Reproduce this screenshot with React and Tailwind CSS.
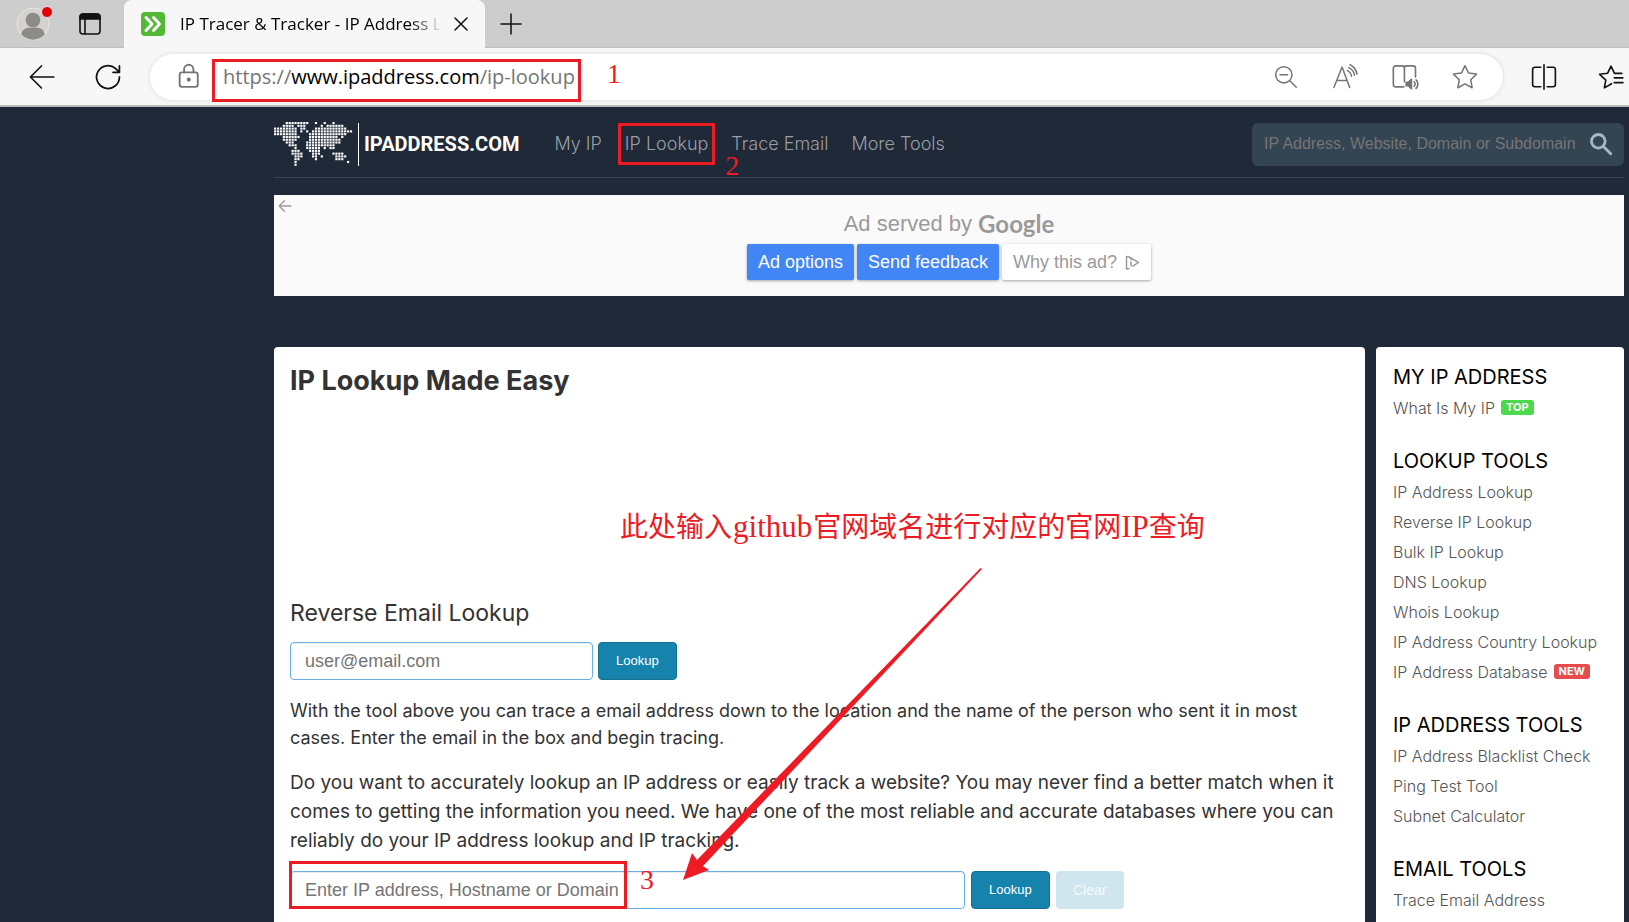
import React from "react";

const RED = "#ed1c24";

const MAP_ROWS = [
  "....########..#..#..#......",
  "...####.###.....#.######...",
  "########.##...###########..",
  "########.#.#.##############",
  "########....#############..",
  "...######...##########.#...",
  "...#####....###########....",
  "....###....############....",
  ".....###...##########......",
  ".......#...#####.#.##......",
  "......###...####...........",
  "......####...###....####...",
  ".......###...##.#....####..",
  ".......##.....#......###...",
  ".......#.................#.",
  ".......#...................",
];

const SIDEBAR = [
  { title: "MY IP ADDRESS", links: [{ label: "What Is My IP", badge: "TOP" }] },
  {
    title: "LOOKUP TOOLS",
    links: [
      { label: "IP Address Lookup" },
      { label: "Reverse IP Lookup" },
      { label: "Bulk IP Lookup" },
      { label: "DNS Lookup" },
      { label: "Whois Lookup" },
      { label: "IP Address Country Lookup" },
      { label: "IP Address Database", badge: "NEW" },
    ],
  },
  {
    title: "IP ADDRESS TOOLS",
    links: [
      { label: "IP Address Blacklist Check" },
      { label: "Ping Test Tool" },
      { label: "Subnet Calculator" },
    ],
  },
  { title: "EMAIL TOOLS", links: [{ label: "Trace Email Address" }] },
];

function Icon({ size = 24, width = 1.5, children, className = "" }) {
  return (
    <svg
      aria-hidden="true"
      width={size}
      height={size}
      viewBox="0 0 24 24"
      fill="none"
      stroke="currentColor"
      strokeWidth={width}
      strokeLinecap="round"
      strokeLinejoin="round"
      className={className}
    >
      {children}
    </svg>
  );
}

function Mark({ children, className }) {
  return (
    <span
      className={
        "pointer-events-none absolute font-['Liberation_Serif',serif] text-[28px] leading-7 text-[#ed1c24] " + className
      }
    >
      {children}
    </span>
  );
}

function TabStrip() {
  return (
    <div className="flex h-12 shrink-0 items-stretch bg-[#cdcdcd]">
      <div className="flex w-[124px] items-center gap-[27px] border-b border-[#bdbdbd] pl-4">
        <button aria-label="Profile" className="shrink-0">
          <svg width="36" height="36" viewBox="0 0 36 36" className="block">
            <circle cx="17" cy="18" r="16" fill="#d3d2ce" stroke="#e6e5e2" />
            <circle cx="17" cy="14" r="7.3" fill="#8d8b88" />
            <path d="M5.4 28.5 C6 22.5 11 21.6 17 21.6 S28 22.5 28.6 28.5 A15.6 15.6 0 0 1 5.4 28.5Z" fill="#8d8b88" />
            <circle cx="31" cy="6" r="5.5" fill="#e30000" stroke="#e4e4e4" />
          </svg>
        </button>
        <button aria-label="Tab actions" className="shrink-0">
          <svg width="22" height="22" viewBox="0 0 22 22" fill="none" stroke="#111" strokeWidth="1.6" className="block">
            <rect x="1" y="1" width="20" height="20" rx="3" />
            <path d="M1 4a3 3 0 0 1 3-3h14a3 3 0 0 1 3 3v2H1z" fill="#111" />
            <path d="M6 6v15" />
          </svg>
        </button>
      </div>
      <div className="flex w-[361px] items-center rounded-t-lg bg-[#f7f7f7] pl-[17px]">
        <svg width="24" height="24" viewBox="0 0 24 24" className="shrink-0">
          <rect width="24" height="24" rx="4" fill="#53b934" />
          <path d="M5 5.500l6 6.500-6 6.500M12.500 5.500l6 6.500-6 6.500" fill="none" stroke="#fff" strokeWidth="3" strokeLinecap="round" strokeLinejoin="round" />
        </svg>
        <div className="ml-[15px] w-[262px] overflow-hidden whitespace-nowrap font-['Open_Sans',sans-serif] text-[17px] text-black [mask-image:linear-gradient(to_right,black_88%,transparent)]">
          IP Tracer &amp; Tracker - IP Address Lookup
        </div>
        <button aria-label="Close tab" className="ml-2.5 text-[#111]">
          <Icon size={18} width={2}>
            <path d="M4 4l16 16M20 4L4 20" />
          </Icon>
        </button>
      </div>
      <div className="flex flex-1 items-center border-b border-[#bdbdbd] pl-3.5">
        <button aria-label="New tab" className="text-[#111]">
          <Icon>
            <path d="M12 2v20M2 12h20" />
          </Icon>
        </button>
      </div>
    </div>
  );
}

function Toolbar() {
  return (
    <div className="flex h-[59px] shrink-0 items-center border-b-2 border-[#b9bab8] bg-[#f7f7f7] pl-[29px] text-[#111]">
      <button aria-label="Back">
        <Icon size={26}>
          <path d="M23 12H1.500M11.500 1.800L1.300 12l10.200 10.200" />
        </Icon>
      </button>
      <button aria-label="Refresh" className="ml-[39px]">
        <Icon size={28}>
          <path d="M21.800 12a9.800 9.800 0 1 1-3.200-7.200l3 3M21.800 2.500v5.500h-5.500" />
        </Icon>
      </button>
      <div className="ml-7 flex h-[46px] flex-1 items-center rounded-full bg-white pl-[25px] pr-6 text-[#757575] shadow-[0_0_5px_rgba(0,0,0,0.12)]">
        <button aria-label="Site information">
          <Icon size={28} width={1.6}>
            <rect x="4" y="8" width="15.500" height="12.500" rx="2" />
            <path d="M7.800 8V5.500a4 4 0 0 1 8 0V8" />
            <circle cx="11.800" cy="14.200" r="1" fill="currentColor" />
          </Icon>
        </button>
        <div className="relative ml-[9px] w-[369px] whitespace-nowrap pl-[11px] font-['Open_Sans',sans-serif] text-xl leading-[30px]">
          <span role="textbox" aria-label="Address bar">
            https://<span className="text-black">www.ipaddress.com</span>/ip-lookup
          </span>
          <span className="pointer-events-none absolute inset-x-0 -bottom-2.5 -top-[3px] border-[3px] border-[#ed1c24]" />
          <Mark className="-right-10 -top-0.5">1</Mark>
        </div>
        <div className="ml-auto flex items-center gap-8">
          <button aria-label="Zoom out">
            <Icon size={26} width={1.4}>
              <circle cx="10" cy="10" r="7.500" />
              <path d="M15.500 15.500L21.500 21.500M6.500 10h7" />
            </Icon>
          </button>
          <button aria-label="Read aloud">
            <Icon size={28} width={1.3}>
              <path d="M2.500 21L9.500 3.500l6.500 17.500M5 15h8.800M14 6.500a6 6 0 0 1 3.500 4.800M15.200 4a9 9 0 0 1 5 6.500M16.300 1.500a11 11 0 0 1 6 8" />
            </Icon>
          </button>
          <button aria-label="Immersive reader">
            <Icon size={28} width={1.4}>
              <path d="M11 20.500H4a2 2 0 0 1-2-2V4.500a2 2 0 0 1 2-2h5.500a2 2 0 0 1 2 2V16M11.500 4.500a2 2 0 0 1 2-2H19a2 2 0 0 1 2 2V12" />
              <path d="M13 16.500h1.800l2.700-2.500v8l-2.700-2.500H13z" fill="currentColor" />
              <path d="M19.800 16.200a2.500 2.500 0 0 1 0 3.800M21.500 14.500a5 5 0 0 1 0 7.200" />
            </Icon>
          </button>
          <button aria-label="Add to favorites">
            <Icon size={28} width={1.3}>
              <path d="M12 2.300l3 6.300 6.900.9-5 4.800 1.200 6.900L12 17.900l-6.100 3.300 1.200-6.900-5-4.800 6.900-.9z" />
            </Icon>
          </button>
        </div>
      </div>
      <button aria-label="Split screen" className="ml-7">
        <Icon size={26}>
          <path d="M9 3H3.500a2 2 0 0 0-2 2v14a2 2 0 0 0 2 2H9M15 3h5.500a2 2 0 0 1 2 2v14a2 2 0 0 1-2 2H15M12 .8v22.400" />
        </Icon>
      </button>
      <button aria-label="Favorites" className="ml-[41px] mr-[5px]">
        <Icon size={26}>
          <path d="M12.500 18.200l-6.600 3.800 1.300-7.200L1.500 9.500l7.300-.9L12 2l3.200 6.600H22M15 12.800H23M15 17.200H23" />
        </Icon>
      </button>
    </div>
  );
}

function SiteLogo() {
  return (
    <a href="#home" className="flex items-center">
      <svg width="80" height="46" viewBox="0 0 80 46" fill="#fff" aria-hidden="true">
        {MAP_ROWS.flatMap((row, y) =>
          [...row].map((c, x) =>
            c === "#" ? <rect key={x + "-" + y} x={x * 2.92} y={y * 2.78 + 1} width="2.200" height="2.100" /> : null
          )
        )}
      </svg>
      <span className="ml-1 h-[43px] w-px bg-white" />
      <span className="ml-[5px] font-['Roboto',sans-serif] text-xl font-bold text-white">IPADDRESS.COM</span>
    </a>
  );
}

function SiteHeader() {
  return (
    <header className="flex h-[71px] items-center border-b border-[#334453] pt-1">
      <SiteLogo />
      <nav className="ml-[35px] flex items-center gap-[23px] text-lg font-light text-[#9a9ea5]">
        <a href="#my-ip">My IP</a>
        <a href="#ip-lookup" className="relative">
          IP Lookup
          <span className="pointer-events-none absolute -inset-x-[7px] -inset-y-[7px] border-[3px] border-[#ed1c24]" />
          <Mark className="-right-[31px] top-[22px]">2</Mark>
        </a>
        <a href="#trace-email">Trace Email</a>
        <a href="#more-tools">More Tools</a>
      </nav>
      <form className="ml-auto flex h-[43px] w-[372px] items-center rounded-md bg-[#334453] pl-3 pr-2.5">
        <input
          aria-label="IP Address, Website, Domain or Subdomain"
          placeholder="IP Address, Website, Domain or Subdomain"
          className="min-w-0 flex-1 bg-transparent font-['Liberation_Sans',sans-serif] text-base outline-none placeholder:text-[#757575]"
        />
        <button type="button" aria-label="Search" className="text-[#a5b9c0]">
          <Icon size={26} width={2.6}>
            <circle cx="9.500" cy="9.500" r="6.300" />
            <path d="M14.500 14.500l6.500 6.500" />
          </Icon>
        </button>
      </form>
    </header>
  );
}

function AdBanner() {
  const button = "h-9 rounded-xs px-[11px] text-lg shadow-[0_1px_3px_rgba(0,0,0,0.35)] ";
  return (
    <section className="relative mt-[17px] h-[101px] bg-[#fafafa] pt-2 font-['Liberation_Sans',sans-serif] text-[#9a9a9a]">
      <button aria-label="Back" className="absolute left-1 top-1">
        <Icon size={14} width={2.2}>
          <path d="M22 12H2M11 3l-9 9 9 9" />
        </Icon>
      </button>
      <div className="flex h-[41px] items-center justify-center gap-1.5 text-[22px]">
        <span>Ad served by</span>
        <span className="font-['Lato',sans-serif] text-2xl font-bold">Google</span>
      </div>
      <div className="flex justify-center gap-[3px]">
        <button className={button + "bg-[#4285f4] text-white"}>Ad options</button>
        <button className={button + "bg-[#4285f4] text-white"}>Send feedback</button>
        <button className={button + "flex items-center gap-2 bg-white"}>
          Why this ad?
          <svg width="15" height="15" viewBox="0 0 15 15" fill="none" stroke="#9a9a9a" strokeWidth="1.500" strokeLinejoin="round">
            <path d="M4.500 13.500L1.500 14V1.500L4 2l9.500 5.300-6 4" />
            <path d="M6 6.500v5M6 4v1.200" />
          </svg>
        </button>
      </div>
    </section>
  );
}

function LookupButton() {
  return (
    <button type="button" className="h-[38px] rounded-[4px] border border-[#12718f] bg-[#1583ac] px-[17px] font-['Liberation_Sans',sans-serif] text-[13px] text-white">
      Lookup
    </button>
  );
}

const FIELD =
  "h-[38px] w-full rounded-[4px] border border-[#66afe9] bg-white px-3.5 font-['Liberation_Sans',sans-serif] text-lg shadow-[inset_0_1px_1px_rgba(0,0,0,0.075)] outline-none placeholder:text-[#757575]";

function MainCard() {
  return (
    <main className="relative flex-1 rounded-[4px] bg-white px-4 pb-16 pt-[18px] text-[#333]">
      <h1 className="text-[27px] font-bold leading-8">IP Lookup Made Easy</h1>
      <h2 className="mt-[200px] text-[23px] leading-8">Reverse Email Lookup</h2>
      <form className="mt-[13px] flex gap-[5px]">
        <div className="w-[303px]">
          <input type="email" aria-label="Email address" placeholder="user@email.com" className={FIELD} />
        </div>
        <LookupButton />
      </form>
      <p className="mt-[17px] text-lg leading-[27px]">
        With the tool above you can trace a email address down to the location and the name of the person who sent it in most
        <br />
        cases. Enter the email in the box and begin tracing.
      </p>
      <p className="mt-[17px] text-[19px] leading-[29px]">
        Do you want to accurately lookup an IP address or easily track a website? You may never find a better match when it
        <br />
        comes to getting the information you need. We have one of the most reliable and accurate databases where you can
        <br />
        reliably do your IP address lookup and IP tracking.
      </p>
      <form className="mt-4 flex gap-1.5">
        <div className="relative w-[675px]">
          <input aria-label="IP address, hostname or domain" placeholder="Enter IP address, Hostname or Domain" className={FIELD} />
          <span className="pointer-events-none absolute -left-px -top-2.5 h-12 w-[338px] border-[3px] border-[#ed1c24]" />
          <Mark className="left-[350px] top-[-5px]">3</Mark>
        </div>
        <LookupButton />
        <button type="button" disabled className="h-[38px] w-[68px] rounded-[4px] bg-[#d0e6ee] font-['Liberation_Sans',sans-serif] text-sm text-[#f4fafc]">
          Clear
        </button>
      </form>
      <div className="pointer-events-none absolute left-[346px] top-[158px] whitespace-nowrap font-['Noto_Sans_CJK_SC',sans-serif] text-[28px] leading-10 text-[#ed1c24]">
        此处输入<span className="px-px font-['Liberation_Serif',serif] text-[31px]">github</span>官网域名进行对应的官网
        <span className="font-['Liberation_Serif',serif] text-[31px]">IP</span>查询
      </div>
      <svg width="300" height="313" viewBox="0 0 300 313" className="pointer-events-none absolute left-[409px] top-[221px]">
        <path d="M0 312L9 285l5 7L297.500 0l1.500 1L20 298l6 4z" fill={RED} />
      </svg>
    </main>
  );
}

function Sidebar() {
  return (
    <aside className="flex w-[248px] flex-col gap-6 rounded-[4px] bg-white px-[17px] pb-16 pt-4">
      {SIDEBAR.map((group) => (
        <section key={group.title}>
          <h3 className="mb-0.5 whitespace-nowrap text-xl leading-7 text-black">{group.title}</h3>
          <ul>
            {group.links.map((link) => (
              <li key={link.label} className="flex h-[30px] items-center gap-1.5 whitespace-nowrap text-base font-light text-[#555]">
                <a href="#tool">{link.label}</a>
                {link.badge && (
                  <span
                    className={
                      "mb-0.5 rounded-[3px] px-[5px] text-[11px] font-bold leading-[15px] text-white " +
                      (link.badge === "TOP" ? "bg-[#4cd94c]" : "bg-[#e64c4c]")
                    }
                  >
                    {link.badge}
                  </span>
                )}
              </li>
            ))}
          </ul>
        </section>
      ))}
    </aside>
  );
}

export default function App() {
  return (
    <div className="flex h-screen flex-col overflow-hidden bg-[#202938] font-['Inter',sans-serif]">
      <TabStrip />
      <Toolbar />
      <div className="min-h-0 flex-1 overflow-hidden">
        <div className="ml-[274px] mr-[5px]">
          <SiteHeader />
          <AdBanner />
          <div className="mt-[51px] flex gap-[11px]">
            <MainCard />
            <Sidebar />
          </div>
        </div>
      </div>
    </div>
  );
}
